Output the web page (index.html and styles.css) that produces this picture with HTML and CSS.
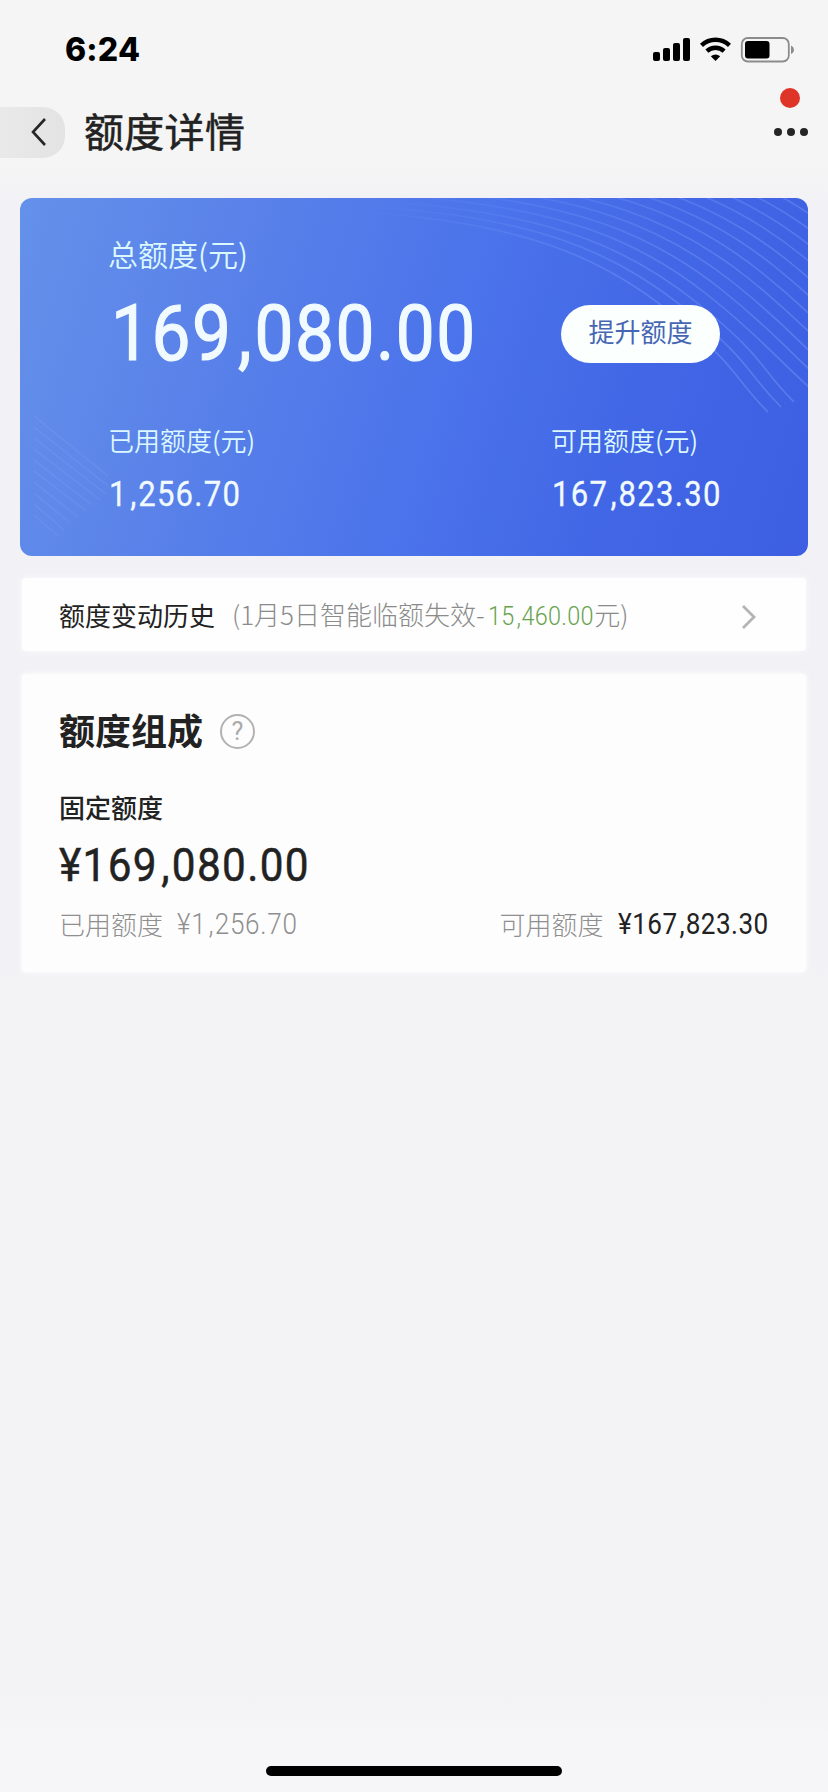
FILE: index.html
```html
<!DOCTYPE html>
<html lang="zh-CN">
<head>
<meta charset="utf-8">
<title>额度详情</title>
<link rel="stylesheet" href="styles.css">
</head>
<body>
<div class="screen">
  <header class="status">
    <span class="clock">6:24</span>
    <svg class="status-icons" width="142" height="28" viewBox="0 0 142 28">
      <rect x="0" y="15" width="7" height="9" rx="2"/>
      <rect x="10" y="11" width="7" height="13" rx="2"/>
      <rect x="20" y="6" width="7" height="18" rx="2"/>
      <rect x="30" y="1" width="7" height="23" rx="2"/>
      <g fill="none" stroke="#000" stroke-width="4.4">
        <path d="M48.500 8.300A20.500 20.500 0 0 1 76.500 8.300"/>
        <path d="M53.900 14.200A12.500 12.500 0 0 1 71.100 14.200"/>
      </g>
      <path d="M57.800 19.300Q62.500 15.500 67.200 19.300L62.500 24Z"/>
      <rect x="88.800" y="1" width="47" height="23.500" rx="6" fill="none" stroke="#8c8c8c" stroke-width="1.800"/>
      <rect x="92" y="4" width="24.500" height="17.500" rx="3"/>
      <path d="M138 8.500Q141 10 141 12.500Q141 15.500 138 17Z" fill="#8c8c8c"/>
    </svg>
  </header>

  <nav class="nav">
    <span class="back">
      <svg width="16" height="30" viewBox="0 0 16 30"><path d="M14 2L2 15L14 28" fill="none" stroke="#262626" stroke-width="2.600"/></svg>
    </span>
    <h1 class="title">额度详情</h1>
    <span class="more"><i class="dot"></i><i class="dot"></i><i class="dot"></i><i class="badge"></i></span>
  </nav>

  <section class="hero">
    <svg class="waves" width="788" height="358" viewBox="0 0 788 358">
      <defs>
        <linearGradient id="fade" gradientUnits="userSpaceOnUse" x1="330" y1="0" x2="800" y2="0">
          <stop offset="0" stop-color="#8ca8ff" stop-opacity="0"/>
          <stop offset=".6" stop-color="#8ca8ff" stop-opacity=".32"/>
          <stop offset="1" stop-color="#8ca8ff" stop-opacity=".36"/>
        </linearGradient>
        <path id="wave" d="M340 14C500 24 580 58 650 114S712 178 748 214"/>
        <path id="wave-long" d="M340 14C500 24 580 58 650 114S720 184 788 236"/>
      </defs>
      <g fill="none" stroke="url(#fade)" stroke-width="1.600">
        <use href="#wave"/>
        <use href="#wave" x="13" y="-5"/>
        <use href="#wave" x="26" y="-10"/>
        <use href="#wave-long" x="39" y="-16"/>
        <use href="#wave-long" x="52" y="-22"/>
        <use href="#wave-long" x="65" y="-28"/>
        <use href="#wave-long" x="78" y="-34"/>
        <use href="#wave-long" x="91" y="-40"/>
        <use href="#wave-long" x="104" y="-46"/>
        <use href="#wave-long" x="117" y="-52"/>
        <use href="#wave-long" x="130" y="-58"/>
        <use href="#wave-long" x="143" y="-64"/>
        <use href="#wave-long" x="156" y="-70"/>
        <use href="#wave-long" x="168" y="-77"/>
        <use href="#wave-long" x="180" y="-84"/>
        <use href="#wave-long" x="191" y="-91"/>
        <use href="#wave-long" x="202" y="-98"/>
      </g>
      <g fill="none" stroke="#a6b8ff" stroke-opacity=".15" stroke-width="1.500">
        <path d="M14 218L88 278"/><path d="M14 229L88 288"/><path d="M14 240L86 296"/>
        <path d="M14 251L80 302"/><path d="M14 262L72 307"/><path d="M14 273L66 313"/>
        <path d="M14 284L58 319"/><path d="M14 295L50 325"/><path d="M14 306L44 332"/>
        <path d="M14 317L38 338"/>
      </g>
    </svg>
    <p class="hero-label">总额度(元)</p>
    <div class="hero-main">
      <span class="num num-xl">169<s>,</s>080.00</span>
      <span class="raise">提升额度</span>
    </div>
    <div class="hero-split">
      <div class="cell">
        <p class="cell-label">已用额度(元)</p>
        <p class="num num-md">1<s>,</s>256.70</p>
      </div>
      <div class="cell cell-right">
        <p class="cell-label">可用额度(元)</p>
        <p class="num num-md">167<s>,</s>823.30</p>
      </div>
    </div>
  </section>

  <section class="history">
    <span class="history-title">额度变动历史</span>
    <span class="history-note">(1月5日智能临额失效-<span class="num num-note">15<s>,</s>460.00</span>元)</span>
    <svg class="arrow" width="16" height="28" viewBox="0 0 16 28"><path d="M2 3L13 14L2 25" fill="none" stroke="#b4b4b4" stroke-width="2.800"/></svg>
  </section>

  <section class="compose">
    <div class="compose-head">
      <h2 class="compose-title">额度组成</h2>
      <span class="help">?</span>
    </div>
    <p class="fixed-label">固定额度</p>
    <p class="num num-lg">¥169<s>,</s>080.00</p>
    <div class="compose-foot">
      <span class="foot-item">已用额度<span class="num num-sm">¥1<s>,</s>256.70</span></span>
      <span class="foot-item">可用额度<span class="num num-sm dark">¥167<s>,</s>823.30</span></span>
    </div>
  </section>

  <div class="home"></div>
</div>
</body>
</html>
```

FILE: styles.css
```css
* { box-sizing: border-box; margin: 0; padding: 0; }

body {
  font-family: "Noto Sans CJK SC", sans-serif;
  color: #222;
}

.screen {
  width: 828px;
  height: 1792px;
  display: flex;
  flex-direction: column;
  overflow: hidden;
  background: linear-gradient(#f5f5f5 0, #f5f5f5 165px, #f2f2f6 200px, #f2f2f6 960px, #f3f3f5 1000px, #f3f3f5 1700px, #f6f6f8 1740px);
}

.status {
  height: 98px;
  padding: 0 33px 0 65px;
  display: flex;
  justify-content: space-between;
  align-items: flex-start;
}
.clock {
  font: 800 32px/40px Inter, sans-serif;
  letter-spacing: .2px;
  padding-top: 30px;
  color: #000;
}
.status-icons { margin-top: 37px; }

.nav {
  height: 68px;
  display: flex;
  align-items: center;
}
.back {
  width: 65px;
  height: 51px;
  padding-left: 31px;
  display: flex;
  align-items: center;
  border-radius: 0 22px 22px 0;
  background: linear-gradient(90deg, #e9e9e9, #e3e3e3);
}
.title {
  margin: -4px auto 0 19px;
  font-size: 40px;
  font-weight: 400;
  line-height: 60px;
  letter-spacing: .3px;
  -webkit-text-stroke: .5px #222;
}
.more {
  position: relative;
  display: flex;
  gap: 5px;
  margin-right: 20px;
}
.dot { width: 8px; height: 8px; border-radius: 50%; background: #252525; }
.badge {
  position: absolute;
  top: -40px;
  left: 6px;
  width: 20px;
  height: 20px;
  border-radius: 50%;
  background: #df3528;
}

/* Condensed figures: glyphs are narrowed and tracked out */
.num {
  display: inline-block;
  font-family: Roboto, sans-serif;
  font-kerning: none;
  white-space: nowrap;
  transform: scaleX(.9);
  transform-origin: 0 50%;
}
.num s { margin: 0 .02em 0 .08em; text-decoration: none; }

.hero {
  position: relative;
  width: 788px;
  height: 358px;
  margin: 32px 20px 0;
  padding: 37px 88px 0;
  border-radius: 12px;
  overflow: hidden;
  color: #f1fbff;
  background: linear-gradient(107deg, #6491ea 0, #5a82e9 25%, #4b73eb 54%, #4267e6 75%, #3d5ee2 100%);
}
.waves { position: absolute; left: 0; top: 0; }
.hero > :not(.waves) { position: relative; }
.hero-label { font-size: 30px; font-weight: 350; line-height: 36px; color: #dcf8ff; }
.hero-main {
  height: 58px;
  margin-top: 34px;
  display: flex;
  justify-content: space-between;
  align-items: center;
}
.num-xl {
  margin-left: 3px;
  font-size: 77px;
  font-weight: 400;
  line-height: 58px;
  letter-spacing: 1.7px;
  -webkit-text-stroke: 1.2px #f1fbff;
}
.raise {
  flex: none;
  width: 159px;
  height: 58px;
  border-radius: 29px;
  background: #fbfffe;
  color: #4666b4;
  font-size: 26px;
  line-height: 51px;
  text-align: center;
}
.hero-split {
  margin-top: 60px;
  display: flex;
  justify-content: space-between;
}
.cell-right { width: 169px; }
.cell-label { font-size: 26px; font-weight: 350; line-height: 34px; color: #dcf8ff; }
.num-md { margin: 20px 0 0 1px; font-size: 34.5px; line-height: 34px; letter-spacing: 1.4px; -webkit-text-stroke: .3px #f1fbff; }

.history {
  height: 73px;
  margin: 22px 22px 0;
  padding: 0 49px 0 37px;
  display: flex;
  align-items: center;
  border-radius: 4px;
  background: #fdfefd;
  box-shadow: 0 0 6px #fafafd;
  font-size: 26px;
  line-height: 40px;
}
.arrow { margin-top: 5px; }
.history-note { margin: 0 auto 0 17px; font-weight: 300; color: #8b8b8b; white-space: nowrap; }
.num-note { margin: 0 -11px 0 3px; font-size: 26px; font-weight: 350; letter-spacing: .3px; color: #68a34e; }

.compose {
  height: 298px;
  margin: 23px 22px 0;
  padding: 31px 38px 0 37px;
  border-radius: 4px;
  background: #fdfdfe;
  box-shadow: 0 0 6px #fff;
}
.compose-head { display: flex; align-items: center; height: 52px; }
.compose-title { font-size: 36px; line-height: 52px; font-weight: 700; margin-top: -4px; }
.help {
  width: 35px;
  height: 35px;
  margin-left: 17px;
  border: 2px solid #b2b2b2;
  border-radius: 50%;
  color: #aaa;
  font: 400 25px/32px Roboto, sans-serif;
  text-align: center;
}
.fixed-label { margin-top: 30px; font-size: 26px; font-weight: 500; line-height: 40px; }
.num-lg { display: block; margin-top: 15px; font-size: 47px; line-height: 46px; letter-spacing: 1.5px; -webkit-text-stroke: .5px #222; }
.compose-foot {
  margin-top: 16px;
  display: flex;
  justify-content: space-between;
  font-size: 26px;
  font-weight: 300;
  line-height: 40px;
  color: #8f8f8f;
}
.foot-item { display: flex; align-items: center; }
.num-sm { margin: 0 -13px 0 14px; font-size: 29px; font-weight: 300; letter-spacing: .8px; }
.dark { margin-right: -17px; color: #222; font-weight: 400; letter-spacing: .5px; }

.home {
  width: 296px;
  height: 10px;
  margin: auto 0 16px 266px;
  border-radius: 5px;
  background: #000;
}
```
